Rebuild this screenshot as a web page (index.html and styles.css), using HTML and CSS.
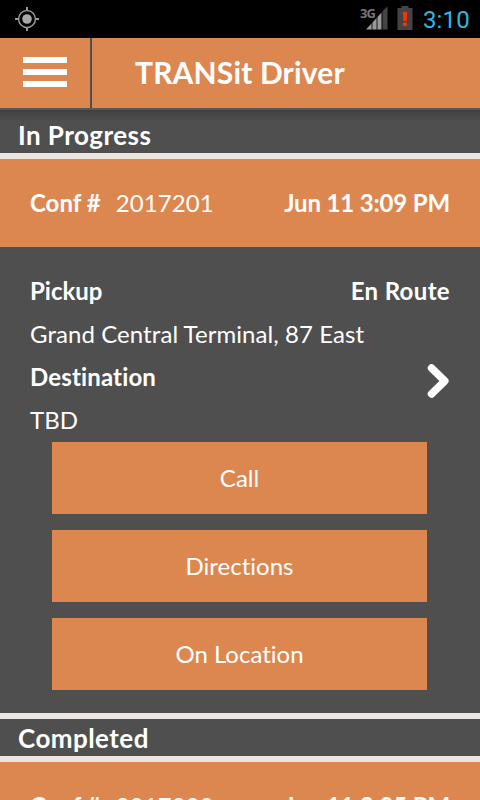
FILE: index.html
```html
<!DOCTYPE html>
<html lang="en">
<head>
    <meta charset="UTF-8">
    <meta name="viewport" content="width=device-width, initial-scale=1.0">
    <title>TRANSit Driver</title>
    <link rel="stylesheet" href="styles.css">
</head>
<body>
    <div class="status-bar">
        <svg class="gps-icon" width="24" height="24" viewBox="0 0 24 24">
            <circle cx="12" cy="12" r="8.4" fill="none" stroke="#999" stroke-width="1.5"/>
            <circle cx="12" cy="12" r="4.8" fill="#a8a8a8"/>
            <path d="M12 0v4M12 20v4M0 12h4M20 12h4" stroke="#999" stroke-width="2"/>
        </svg>
        <div class="status-right">
            <div class="signal">
                <span class="network">3G</span>
                <svg width="22" height="24" viewBox="0 0 22 24">
                    <path d="M0 23.500L5.500 17.500v6zM6.500 16.500l4-4.500v11.500h-4zM11.500 11l4-4.500v17h-4z" fill="#999"/>
                    <path d="M5.500 17.500l1-1v7h-1zM10.500 12l1-1v12.500h-1z" fill="#666"/>
                    <path d="M16.500 5L21.500 .5v23h-5z" fill="#444"/>
                </svg>
            </div>
            <svg class="battery-icon" width="16" height="24" viewBox="0 0 16 24">
                <path d="M4.500 0h7v2H15.500v22H.5V2h4z" fill="#444"/>
                <path d="M5.800 6h4.400l-.7 9h-3z" fill="#ff3300"/>
                <rect x="6" y="16.500" width="4" height="3.500" rx="1" fill="#ff3300"/>
            </svg>
            <span class="clock">3:10</span>
        </div>
    </div>

    <header class="header">
        <button class="menu-button" aria-label="Menu">
            <span></span>
            <span></span>
            <span></span>
        </button>
        <h1>TRANSit Driver</h1>
    </header>

    <main>
        <h2 class="section-title first">In Progress</h2>
        <div class="trip-header">
            <div><b>Conf #</b><span class="conf-number">2017201</span></div>
            <b class="trip-time">Jun 11 3:09 PM</b>
        </div>
        <div class="trip">
            <div class="trip-row">
                <b>Pickup</b>
                <b class="trip-status">En Route</b>
            </div>
            <div class="trip-row address">Grand Central Terminal, 87 East</div>
            <div class="trip-row">
                <b class="destination">Destination</b>
                <svg class="arrow" width="22" height="36" viewBox="0 0 22 36">
                    <path d="M4.500 5L17.800 18L4.500 31" fill="none" stroke="#fff" stroke-width="7.500" stroke-linecap="round" stroke-linejoin="round"/>
                </svg>
            </div>
            <div class="trip-row">TBD</div>
            <div class="actions">
                <button>Call</button>
                <button>Directions</button>
                <button>On Location</button>
            </div>
        </div>

        <h2 class="section-title">Completed</h2>
        <div class="trip-header">
            <div><b>Conf #</b><span class="conf-number">2017200</span></div>
            <b class="trip-time">Jun 11 3:05 PM</b>
        </div>
    </main>
</body>
</html>
```

FILE: styles.css
```css
* {
    box-sizing: border-box;
}
body {
    font-family: Lato, sans-serif;
    font-size: 24px;
    font-variant-ligatures: none;
    color: #fff;
    margin: 0;
    height: 800px;
    overflow: hidden;
    background-color: #4f4f4f;
}
b {
    font-weight: bold;
}
button {
    font: inherit;
    color: inherit;
    border: none;
    padding: 0;
    border-radius: 0;
    background-color: #dd8750;
}
.status-bar {
    display: flex;
    justify-content: space-between;
    align-items: center;
    height: 38px;
    padding: 0 10px 0 15px;
    background-color: #000;
}
.status-right {
    display: flex;
    align-items: center;
}
.signal {
    display: flex;
    margin-right: 9px;
    position: relative;
    top: -1px;
}
.network {
    position: absolute;
    left: -6px;
    top: 1px;
    font: bold 13px/12px "Open Sans", sans-serif;
    letter-spacing: -0.8px;
    color: #777;
}
.battery-icon {
    margin: 0 10px 2px 0;
}
.clock {
    font-family: Roboto, sans-serif;
    font-size: 24px;
    letter-spacing: 0.2px;
    line-height: 38px;
    padding-top: 1px;
    color: #33b5e5;
}
.header {
    display: flex;
    height: 70px;
    background-color: #dd8750;
}
.menu-button {
    width: 92px;
    padding: 0 0 2px 23px;
    border-right: 2px solid #4f4f4f;
    display: flex;
    flex-direction: column;
    justify-content: center;
    gap: 6px;
}
.menu-button span {
    width: 44px;
    height: 6px;
    background-color: #fff;
}
h1 {
    margin: 0;
    padding-left: 43px;
    font-size: 30px;
    letter-spacing: 0.15px;
    line-height: 68px;
}
.section-title {
    margin: 0;
    height: 49px;
    padding-left: 18px;
    border-top: 6px solid #ebe6df;
    border-bottom: 6px solid #ebe6df;
    font-size: 26px;
    letter-spacing: 0.45px;
    line-height: 38px;
}
.section-title.first {
    height: 51px;
    border-top: none;
    padding-top: 8px;
    background: linear-gradient(#575757 2px, #3c3c3c 2px, #444 4px, #4f4f4f 14px);
}
.trip-header {
    display: flex;
    justify-content: space-between;
    height: 88px;
    padding: 0 30px;
    line-height: 88px;
    background-color: #dd8750;
}
.conf-number {
    margin-left: 15px;
    letter-spacing: 0.1px;
}
.trip-time {
    letter-spacing: -0.15px;
}
.trip-status {
    letter-spacing: 0.35px;
}
.trip {
    height: 466px;
    padding: 23px 30px 0;
}
.trip-row {
    display: flex;
    justify-content: space-between;
    height: 43px;
    line-height: 41px;
}
.trip-row.address {
    letter-spacing: 0.07px;
}
.destination {
    letter-spacing: 0.15px;
}
.arrow {
    margin-top: 7px;
    margin-right: 1px;
}
.actions {
    display: flex;
    flex-direction: column;
    gap: 16px;
    margin: 0 23px 0 22px;
}
.actions button {
    height: 72px;
    padding-bottom: 2px;
}
```
